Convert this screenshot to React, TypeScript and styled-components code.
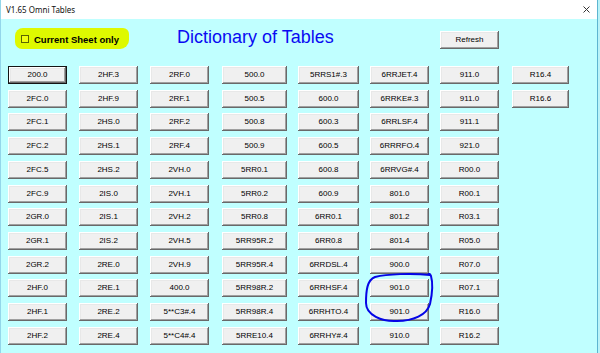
import React from "react";
import styled, { createGlobalStyle } from "styled-components";

const Global = createGlobalStyle`
  html, body { margin: 0; padding: 0; }
  body { width: 600px; height: 353px; overflow: hidden; background: #b9f3f8; }
`;

const Window = styled.div`
  width: 598px;
  height: 353px;
  box-sizing: border-box;
  border-left: 1px solid #93d6ea;
  border-right: 1px solid #5eb5d1;
  background: #c0ffff;
  display: flex;
  flex-direction: column;
  position: relative;
`;

const TitleBar = styled.div`
  height: 19px;
  background: #ffffff;
  display: flex;
  align-items: center;
  justify-content: space-between;
  padding: 0 7px 0 5px;
  font-family: "Noto Sans", "DejaVu Sans", sans-serif;
  font-size: 8px;
  color: #111;
`;

const CloseIcon = styled.svg`
  width: 7px;
  height: 7px;
`;

const Header = styled.div`
  height: 47px;
  display: grid;
  grid-template-columns: 114px 48px 263px 59px;
  align-items: start;
  padding-left: 14px;
`;

const Highlight = styled.label`
  margin-top: 9px;
  height: 21px;
  background: #def900;
  border-radius: 8px 6px 9px 7px;
  display: flex;
  align-items: center;
  padding: 2px 0 0 6px;
  box-sizing: border-box;
  gap: 5px;
  font-family: "Liberation Sans", Arial, sans-serif;
  font-weight: bold;
  font-size: 9.5px;
  color: #000;
`;

const Check = styled.span`
  width: 8px;
  height: 8px;
  box-sizing: border-box;
  border: 1px solid #5b6600;
  background: #f0ff10;
  margin-top: -2px;
`;

const Heading = styled.h1`
  grid-column: 3;
  margin: 8px 0 0 0;
  font-family: "Liberation Sans", Arial, sans-serif;
  font-weight: normal;
  font-size: 18px;
  line-height: 21px;
  color: #0a0af2;
`;

const Btn = styled.button<{ $default?: boolean }>`
  display: block;
  width: 100%;
  height: 18px;
  padding: 0;
  margin: 0;
  box-sizing: border-box;
  background: #f0f0f0;
  border: ${(p) => (p.$default ? "1px solid #141414" : "none")};
  box-shadow: inset -1px -1px #696969, inset 1px 1px #ffffff,
    inset -2px -2px #a0a0a0, inset 2px 2px #e8e8e8;
  font-family: "Liberation Sans", Arial, sans-serif;
  font-size: 8px;
  color: #000;
  text-align: center;
  line-height: 16px;
`;

const RefreshBtn = styled(Btn)`
  grid-column: 4;
  margin-top: 12px;
`;

const Board = styled.div`
  display: flex;
  padding-left: 7px;
`;

const Column = styled.div<{ $w: number; $gap: number }>`
  width: ${(p) => p.$w}px;
  margin-left: ${(p) => p.$gap}px;
  display: flex;
  flex-direction: column;
  gap: 5.73px;
`;

const Scribble = styled.svg`
  position: absolute;
  left: 359px;
  top: 271px;
  width: 78px;
  height: 56px;
  overflow: visible;
  pointer-events: none;
`;

const columns: { w: number; gap: number; items: string[] }[] = [
  { w: 59, gap: 0, items: ["200.0", "2FC.0", "2FC.1", "2FC.2", "2FC.5", "2FC.9", "2GR.0", "2GR.1", "2GR.2", "2HF.0", "2HF.1", "2HF.2"] },
  { w: 59, gap: 12, items: ["2HF.3", "2HF.9", "2HS.0", "2HS.1", "2HS.2", "2IS.0", "2IS.1", "2IS.2", "2RE.0", "2RE.1", "2RE.2", "2RE.4"] },
  { w: 59, gap: 12, items: ["2RF.0", "2RF.1", "2RF.2", "2RF.4", "2VH.0", "2VH.1", "2VH.2", "2VH.5", "2VH.9", "400.0", "5**C3#.4", "5**C4#.4"] },
  { w: 65, gap: 13, items: ["500.0", "500.5", "500.8", "500.9", "5RR0.1", "5RR0.2", "5RR0.8", "5RR95R.2", "5RR95R.4", "5RR98R.2", "5RR98R.4", "5RRE10.4"] },
  { w: 61, gap: 11, items: ["5RRS1#.3", "600.0", "600.3", "600.5", "600.8", "600.9", "6RR0.1", "6RR0.8", "6RRDSL.4", "6RRHSF.4", "6RRHTO.4", "6RRHY#.4"] },
  { w: 59, gap: 11, items: ["6RRJET.4", "6RRKE#.3", "6RRLSF.4", "6RRRFO.4", "6RRVG#.4", "801.0", "801.2", "801.4", "900.0", "901.0", "901.0", "910.0"] },
  { w: 59, gap: 11, items: ["911.0", "911.0", "911.1", "921.0", "R00.0", "R00.1", "R03.1", "R05.0", "R07.0", "R07.1", "R16.0", "R16.2"] },
  { w: 57, gap: 13, items: ["R16.4", "R16.6"] },
];

export default function App() {
  return (
    <>
      <Global />
      <Window>
        <TitleBar>
          <span>V1.65 Omni Tables</span>
          <CloseIcon viewBox="0 0 7 7">
            <path d="M0.5 0.5 L6.5 6.5 M6.5 0.5 L0.5 6.5" stroke="#333" strokeWidth="1" />
          </CloseIcon>
        </TitleBar>
        <Header>
          <Highlight>
            <Check />
            Current Sheet only
          </Highlight>
          <Heading>Dictionary of Tables</Heading>
          <RefreshBtn>Refresh</RefreshBtn>
        </Header>
        <Board>
          {columns.map((c, ci) => (
            <Column key={ci} $w={c.w} $gap={c.gap}>
              {c.items.map((t, i) => (
                <Btn key={i} $default={ci === 0 && i === 0}>
                  {t}
                </Btn>
              ))}
            </Column>
          ))}
        </Board>
        <Scribble viewBox="0 0 78 56">
          <path
            d="M70 4 C52 2, 27 3, 15 6 C7 9, 6 20, 6 32 C6 44, 22 51, 37 50 C53 50, 67 44, 70 33 C72 24, 73 12, 71 5 C70 3, 69 2, 68 4"
            fill="none"
            stroke="#0505e6"
            strokeWidth="2"
            strokeLinecap="round"
          />
        </Scribble>
      </Window>
    </>
  );
}
